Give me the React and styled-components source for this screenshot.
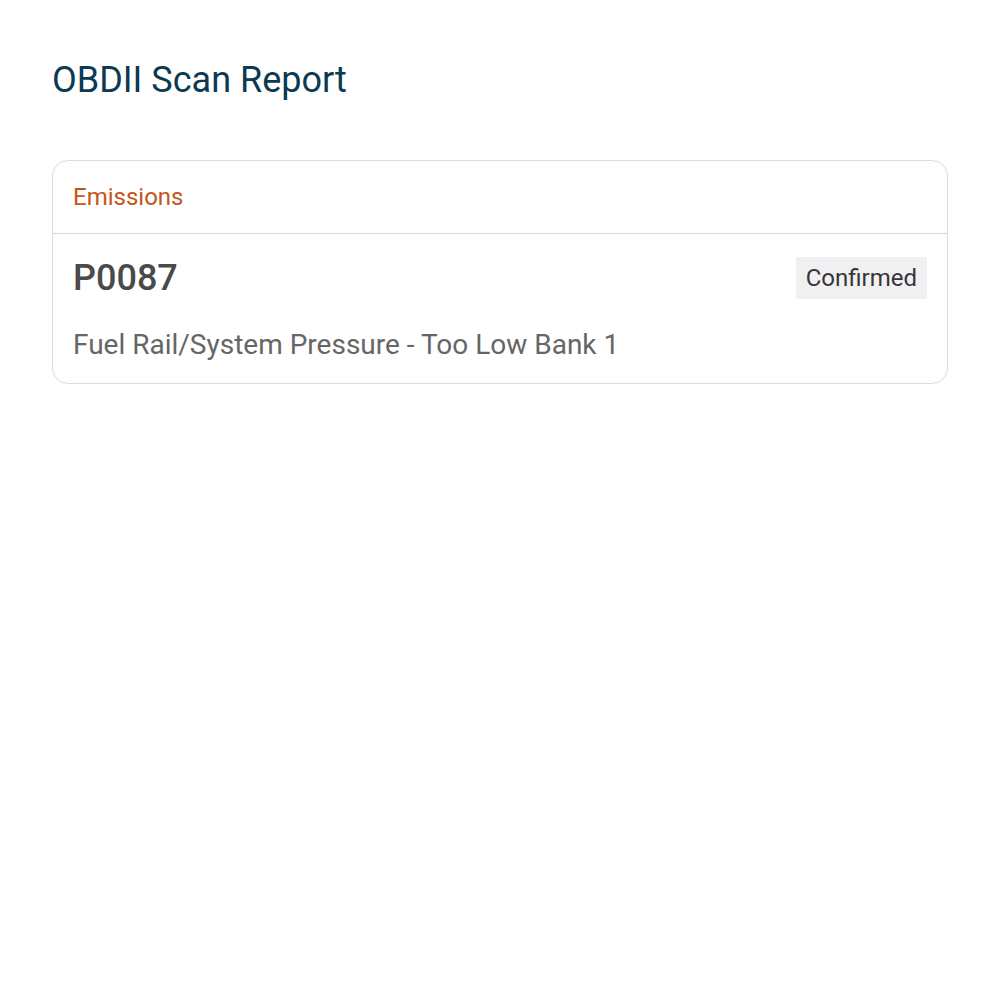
import React from 'react'
import styled, { createGlobalStyle } from 'styled-components'

const GlobalStyle = createGlobalStyle`
  body {
    margin: 0;
    background: #ffffff;
    font-family: Roboto, "Liberation Sans", sans-serif;
  }
`

const Page = styled.div`
  padding: 56px 52px;
`

const Title = styled.h1`
  margin: 0 0 56px;
  font-size: 36px;
  font-weight: 400;
  line-height: 48px;
  color: #0b3a52;
`

const Card = styled.section`
  border: 1px solid #dcdcdc;
  border-radius: 16px;
  overflow: hidden;
`

const CardHeader = styled.div`
  padding: 22px 20px;
  border-bottom: 1px solid #d6d6d6;
  font-size: 24px;
  line-height: 28px;
  color: #c4561a;
`

const CardBody = styled.div`
  padding: 22px 20px 21px;
  display: flex;
  flex-direction: column;
  gap: 28px;
`

const Row = styled.div`
  display: flex;
  align-items: center;
  justify-content: space-between;
`

const Code = styled.span`
  font-size: 36px;
  font-weight: 500;
  line-height: 44px;
  color: #4a4a4a;
`

const Badge = styled.span`
  padding: 6px 10px;
  background: #f0f0f3;
  font-size: 24px;
  line-height: 30px;
  color: #363636;
`

const Description = styled.p`
  margin: 0;
  font-size: 28px;
  line-height: 34px;
  color: #666666;
`

export default function App() {
  return (
    <>
      <GlobalStyle />
      <Page>
        <Title>OBDII Scan Report</Title>
        <Card>
          <CardHeader>Emissions</CardHeader>
          <CardBody>
            <Row>
              <Code>P0087</Code>
              <Badge>Confirmed</Badge>
            </Row>
            <Description>Fuel Rail/System Pressure - Too Low Bank 1</Description>
          </CardBody>
        </Card>
      </Page>
    </>
  )
}
